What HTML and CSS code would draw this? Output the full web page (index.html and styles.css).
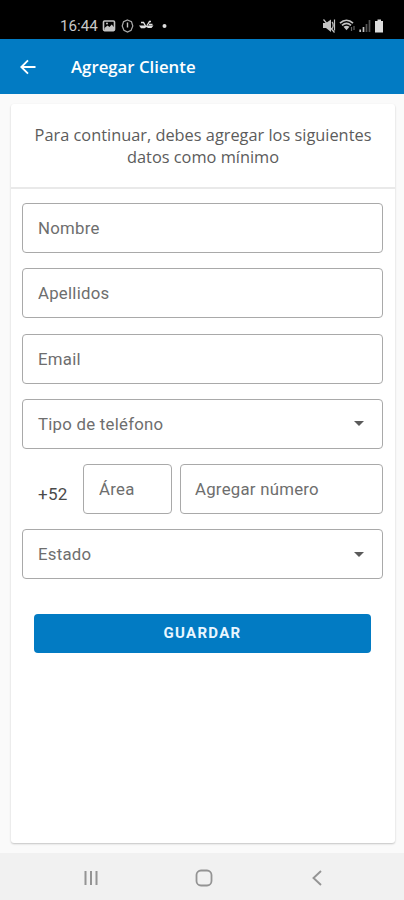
FILE: index.html
```html
<!DOCTYPE html>
<html lang="es">

<head>
    <meta charset="UTF-8">
    <meta name="viewport" content="width=device-width, initial-scale=1.0">
    <title>Agregar Cliente</title>
    <link rel="stylesheet" href="styles.css">
</head>

<body>

    <div class="status-bar">
        <span class="clock">16:44</span>
        <svg class="status-left" width="66" height="16" viewBox="0 0 66 16">
            <!-- image -->
            <rect x="1.5" y="3" width="11" height="9.6" rx="1" fill="none" stroke="#c4c4c4" stroke-width="1.6" />
            <path d="M2.500 12v-2l3-2.600 2 1.600 2.200-2.600 2.600 3v2.600z" fill="#c4c4c4" />
            <circle cx="5" cy="5.6" r="1" fill="#c4c4c4" />
            <!-- alert -->
            <path d="M25.500 2l4 1.800 1.300 4.200-1.700 4.200-3.600 1.800-3.600-1.800-1.700-4.200 1.300-4.200z" fill="none" stroke="#aaa" stroke-width="1.200" />
            <path d="M25.500 4.500v5" stroke="#c4c4c4" stroke-width="1.400" />
            <!-- app notification -->
            <path d="M39 4.500h2.500l2 3.500M49 3.500h-1.500l-2.500 4M47 6.500h3.500" fill="none" stroke="#ddd" stroke-width="1.400" />
            <path d="M37 7.500h14.500l-2 2.500h-3.500l-1.500-1-2 1.200h-3.500z" fill="#ddd" />
            <circle cx="62.500" cy="8" r="2" fill="#ddd" />
        </svg>
        <svg class="status-right" width="64" height="16" viewBox="0 0 64 16">
            <!-- muted speaker -->
            <path d="M1 5h3l5-3.500v12.500l-5-4h-3z" fill="#c4c4c4" />
            <path d="M1.500 1.500l11 13M10 4c1.500 1.500 1.500 5 0 7M12.500 1.500v11" fill="none" stroke="#c4c4c4" stroke-width="1.200" />
            <!-- wifi -->
            <path d="M18 5.200c4-3.800 9-3.800 13 0M20 7.400c3-2.600 6-2.600 9 0" fill="none" stroke="#c4c4c4" stroke-width="1.700" />
            <path d="M21.500 8.800q3-2.300 6 0l-3 3.400z" fill="#c4c4c4" />
            <path d="M29.500 9v4M32 8v4" stroke="#666" stroke-width="1.200" />
            <!-- signal -->
            <path d="M38.200 14v-2.500M41.500 14v-5" stroke="#c4c4c4" stroke-width="1.700" />
            <path d="M44.500 14v-8M47.500 14v-12" stroke="#555" stroke-width="1.700" />
            <!-- battery -->
            <path d="M55.500 1.500h3.500v1.500h2v11.500h-8v-11.500h2.500z" fill="#ddd" />
        </svg>
    </div>

    <header class="app-bar">
        <svg class="back-icon" width="16" height="16" viewBox="0 0 16 16">
            <path d="M15.500 8H1.500M8 1.300L1.300 8L8 14.700" fill="none" stroke="#fff" stroke-width="1.900" />
        </svg>
        <h1 class="title">Agregar Cliente</h1>
    </header>

    <main class="content">
        <div class="card">
            <p class="intro">Para continuar, debes agregar los siguientes<br>datos como mínimo</p>

            <form class="client-form">
                <input class="field" type="text" placeholder="Nombre">
                <input class="field" type="text" placeholder="Apellidos">
                <input class="field" type="text" placeholder="Email">
                <div class="field dropdown">
                    <span>Tipo de teléfono</span>
                    <span class="caret"></span>
                </div>
                <div class="phone-row">
                    <span class="prefix">+52</span>
                    <input class="field area" type="text" placeholder="Área">
                    <input class="field number" type="text" placeholder="Agregar número">
                </div>
                <div class="field dropdown">
                    <span>Estado</span>
                    <span class="caret"></span>
                </div>
                <button class="save" type="button">GUARDAR</button>
            </form>
        </div>
    </main>

    <nav class="nav-bar">
        <svg width="18" height="18" viewBox="0 0 18 18">
            <path d="M3.500 2v14M9 2v14M14.500 2v14" stroke="#949494" stroke-width="2" />
        </svg>
        <svg width="18" height="18" viewBox="0 0 18 18">
            <rect x="1.500" y="1.500" width="15" height="15" rx="4.500" fill="none" stroke="#949494" stroke-width="1.800" />
        </svg>
        <svg width="18" height="18" viewBox="0 0 18 18">
            <path d="M13 2L5.500 9L13 16" fill="none" stroke="#949494" stroke-width="1.900" />
        </svg>
    </nav>

</body>

</html>
```
FILE: styles.css
```css
* {
    box-sizing: border-box;
}

body {
    margin: 0;
    height: 900px;
    display: flex;
    flex-direction: column;
    background: #fafafa;
    font-family: Roboto, sans-serif;
    overflow: hidden;
}

.status-bar {
    height: 39px;
    padding: 12px 18px 0 60px;
    display: flex;
    align-items: center;
    background: #000;
}

.clock {
    width: 42px;
    font-size: 15.2px;
    color: #c8c8c8;
}

.status-right {
    margin-left: auto;
}

.app-bar {
    height: 55px;
    padding-left: 20px;
    display: flex;
    align-items: center;
    background: #027bc3;
}

.title {
    margin: 0 0 0 35px;
    font-family: "Open Sans", sans-serif;
    font-size: 16.8px;
    font-weight: 600;
    color: #fff;
}

.content {
    flex: 1;
    padding: 10px 9px 10px 11px;
    display: flex;
}

.card {
    flex: 1;
    min-width: 0;
    background: #fff;
    border-radius: 3px;
    box-shadow: 0 1px 2px rgba(0, 0, 0, 0.22);
}

.intro {
    margin: 0;
    height: 85px;
    padding-top: 20px;
    border-bottom: 2px solid #e9e9e9;
    font-family: "Open Sans", sans-serif;
    font-size: 16.35px;
    line-height: 22px;
    text-align: center;
    white-space: nowrap;
    color: #5c5c5c;
}

.client-form {
    padding: 14px 12px 0 11px;
    display: flex;
    flex-direction: column;
    gap: 15.3px;
}

.field {
    width: 100%;
    height: 50px;
    padding: 0 15px;
    border: 1px solid #a9a9a9;
    border-radius: 4px;
    background: #fff;
    font-family: Roboto, sans-serif;
    font-size: 16.8px;
    letter-spacing: 0.25px;
    color: #6e6e6e;
}

.field::placeholder {
    color: #6e6e6e;
    opacity: 1;
}

.dropdown {
    padding-right: 18px;
    display: flex;
    align-items: center;
    justify-content: space-between;
}

.caret {
    border: 5px solid transparent;
    border-top-color: #5a5a5a;
    border-bottom: 0;
}

.phone-row {
    display: flex;
}

.prefix {
    width: 61px;
    padding: 20px 0 0 16px;
    font-size: 17px;
    letter-spacing: 0.3px;
    color: #4a4a4a;
}

.area {
    width: 89px;
    margin-right: 8px;
}

.number {
    flex: 1;
    width: auto;
    min-width: 0;
    padding: 0 14px;
}

.save {
    height: 39px;
    margin: 19px 12px 0;
    border: 0;
    border-radius: 4px;
    background: #027bc3;
    font-family: Roboto, sans-serif;
    font-size: 15px;
    font-weight: 700;
    letter-spacing: 1.3px;
    color: #e9f6ff;
}

.nav-bar {
    height: 47px;
    padding: 2px 78px 0 82px;
    display: flex;
    align-items: center;
    justify-content: space-between;
    background: #f1f1f1;
}
```
